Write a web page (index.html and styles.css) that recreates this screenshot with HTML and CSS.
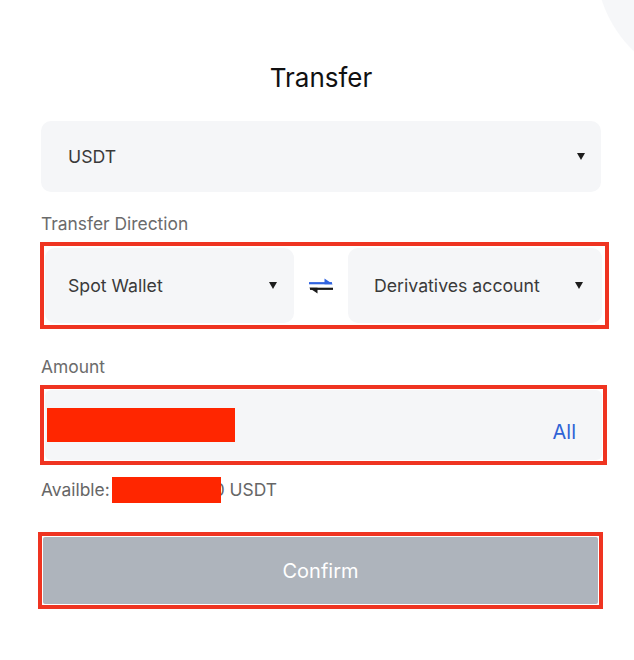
FILE: index.html
```html
<!DOCTYPE html>
<html lang="en">

<head>
    <meta charset="UTF-8">
    <meta name="viewport" content="width=device-width, initial-scale=1.0">
    <title>Transfer</title>
    <link rel="stylesheet" href="styles.css">
</head>

<body>

    <div class="panel">
        <h1>Transfer</h1>

        <div class="select coin">
            <span>USDT</span>
            <i class="caret"></i>
        </div>

        <div class="label">Transfer Direction</div>
        <div class="mark mark-direction">
            <div class="select from">
                <span>Spot Wallet</span>
                <i class="caret"></i>
            </div>
            <div class="swap">
                <svg width="26" height="20" viewBox="0 0 26 20">
                    <path d="M1 7.2H24" stroke="#3164e0" stroke-width="2.2" />
                    <path d="M25 8.3L16.5 2.5V8.3Z" fill="#3164e0" />
                    <path d="M2 12.8H25" stroke="#1a1a1a" stroke-width="2.2" />
                    <path d="M1 11.7L9.5 17.5V11.7Z" fill="#1a1a1a" />
                </svg>
            </div>
            <div class="select to">
                <span>Derivatives account</span>
                <i class="caret"></i>
            </div>
        </div>

        <div class="label label-amount">Amount</div>
        <div class="mark mark-amount">
            <div class="amount">
                <span class="hidden-value"></span>
                <a class="all">All</a>
            </div>
        </div>

        <div class="available">
            Availble:<span class="hidden-value small"></span>0 USDT
        </div>

        <div class="mark mark-confirm">
            <button class="confirm">Confirm</button>
        </div>
    </div>

</body>

</html>
```

FILE: styles.css
```css
body {
    font-family: 'Inter', 'Noto Sans', sans-serif;
    color: #333;
    margin: 0;
    /* cercle gris en haut à droite */
    background: #fff radial-gradient(circle at 721px -39px, #f6f7f9 125px, #fff 126px) no-repeat;
}

.panel {
    padding: 62px 0 0 41px;
    width: 560px;
}

h1 {
    margin: 0 0 27px;
    font-size: 26px;
    font-weight: 400;
    line-height: 32px;
    color: #111;
    text-align: center;
}

.select {
    display: flex;
    align-items: center;
    justify-content: space-between;
    box-sizing: border-box;
    background-color: #f5f6f8;
    border-radius: 10px;
    font-size: 17.7px;
    color: #3a3a3a;
}

.coin {
    height: 71px;
    padding: 0 16px 0 27px;
}

.caret {
    width: 0;
    height: 0;
    border-left: 4.5px solid transparent;
    border-right: 4.5px solid transparent;
    border-top: 7px solid #1d1d1d;
}

.label {
    margin-top: 20px;
    font-size: 17.4px;
    line-height: 24px;
    color: #6b6b6b;
}

/* cadres rouges */
.mark {
    box-sizing: border-box;
    border: 4px solid #ef3421;
}

.mark-direction {
    display: flex;
    align-items: center;
    width: 569px;
    margin: 6px 0 0 -1px;
    padding: 2px 3px 2px 1px;
}

.from {
    width: 249px;
    height: 75px;
    padding: 0 17px 0 23px;
}

.swap {
    display: flex;
    justify-content: center;
    width: 54px;
    padding-top: 1px;
}

.to {
    width: 254px;
    height: 75px;
    padding: 0 19px 0 26px;
}

.label-amount {
    margin-top: 26px;
}

.mark-amount {
    width: 567px;
    margin: 6px 0 0 -1px;
    padding: 1px;
}

.amount {
    display: flex;
    align-items: center;
    justify-content: space-between;
    height: 70px;
    padding: 0 26px 0 2px;
    background-color: #f5f6f8;
    border-radius: 6px;
}

.hidden-value {
    display: inline-block;
    width: 188px;
    height: 34px;
    background-color: #ff2600;
}

.all {
    padding-top: 14px;
    font-size: 20px;
    color: #2f63d6;
}

.available {
    margin-top: 12px;
    font-size: 17.4px;
    line-height: 26px;
    color: #666;
}

.hidden-value.small {
    position: relative;
    width: 109px;
    height: 26px;
    margin: 0 -7px 0 2px;
    vertical-align: top;
}

.mark-confirm {
    width: 565px;
    margin: 29px 0 0 -3px;
    padding: 1px;
}

.confirm {
    display: block;
    width: 100%;
    height: 67px;
    border: none;
    border-radius: 2px;
    background-color: #aeb4bc;
    font-family: inherit;
    font-size: 20px;
    color: #fff;
}
```
